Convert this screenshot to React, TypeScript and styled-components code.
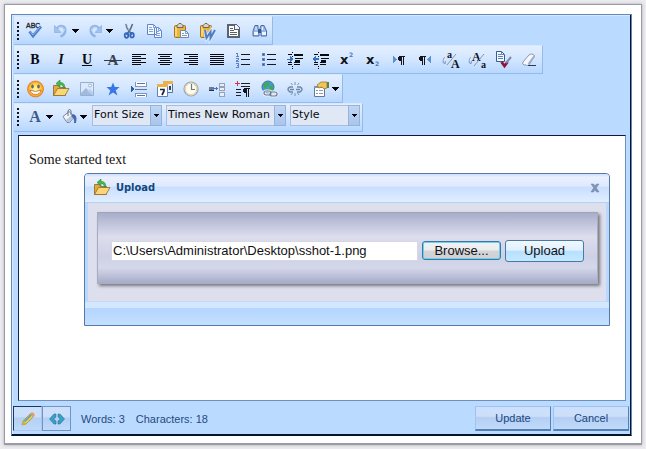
import React from 'react';
import styled, { createGlobalStyle, css } from 'styled-components';

const GlobalStyle = createGlobalStyle`
  * { box-sizing: border-box; }
  body { margin: 0; background: #ebebf0; }
  button, input, select, textarea { margin: 0; font: inherit; color: inherit; border-radius: 0; }
`;

const Page = styled.main`
  min-height: 100vh;
  padding: 4px;
  display: flex;
  background: #ebebf0;
`;

const Frame = styled.div`
  flex: 1;
  min-width: 0;
  display: flex;
  padding: 9px 9px 7px 6px;
  background: #fff;
  border: 1px solid #9b9ba1;
  border-bottom-width: 2px;
  box-shadow: 0 0 3px #a9a9b0;
`;

const Editor = styled.section`
  flex: 1;
  min-width: 0;
  display: flex;
  flex-direction: column;
  padding: 1px 1px 2px;
  background: #bbdaff;
  border: 1px solid #6288b5;
  border-bottom-color: #07152c;
  box-shadow: inset -1px -1px 0 #07152c, inset 1px 1px 0 #d8eaff;
  font-family: 'Liberation Sans', Arial, sans-serif;
`;

const ToolBar = styled.div<{ $short?: boolean }>`
  align-self: flex-start;
  display: flex;
  height: 29px;
  margin-left: 1px;
  padding-right: ${(p) => (p.$short ? 2 : 0)}px;
  align-items: ${(p) => (p.$short ? 'flex-start' : 'center')};
  background: linear-gradient(#e3efff 0%, #d3e6ff 50%, #b7d7ff 100%);
  border-right: 1px solid #95bae8;
  border-bottom: 1px solid #95bae8;
  border-top: 1px solid #d8e8ff;
`;

const Grip = styled.span<{ $short?: boolean }>`
  width: 2px;
  height: 18px;
  margin: ${(p) => (p.$short ? 4 : 0)}px 3px 0;
  flex: none;
  background: repeating-linear-gradient(#10131c 0 2px, transparent 2px 4px);
`;

const ToolButton = styled.button<{ $menu?: boolean }>`
  flex: none;
  width: ${(p) => (p.$menu ? 34 : 26)}px;
  height: 26px;
  padding: 0 0 0 4px;
  display: flex;
  align-items: center;
  gap: 2px;
  border: 0;
  background: none;
  cursor: pointer;
  & svg { flex: none; }
`;

const IconSvg = styled.svg`
  width: 18px;
  height: 18px;
  display: block;
  overflow: visible;
`;

const CaretSvg = styled.svg`
  width: 7px;
  height: 4px;
  display: block;
`;

const Letter = styled.span<{ $kind?: 'italic' | 'underline' }>`
  width: 18px;
  text-align: center;
  font: bold 14px/16px 'Liberation Serif', serif;
  color: #0b0b10;
  ${(p) => p.$kind === 'italic' && css`font-style: italic;`}
  ${(p) => p.$kind === 'underline' && css`text-decoration: underline;`}
`;

const Fields = styled.div`
  display: flex;
  gap: 4px;
  margin: 1px 0 0 2px;
`;

const SelectBox = styled.label<{ $wide?: boolean }>`
  position: relative;
  width: ${(p) => (p.$wide ? 120 : 70)}px;
  height: 21px;
`;

const Select = styled.select`
  display: block;
  appearance: none;
  width: 100%;
  height: 21px;
  padding: 0 14px 2px 1px;
  border: 1px solid #a3bde3;
  background: #dfe8f4;
  color: #0a0a10;
  font: 11px/16px 'DejaVu Sans', Verdana, sans-serif;
`;

const SelectArrow = styled.span`
  position: absolute;
  top: 0;
  right: 0;
  width: 12px;
  height: 21px;
  display: grid;
  place-items: center;
  pointer-events: none;
  background: linear-gradient(#c0d7f5, #a8c5ec);
  border: 1px solid #95b2dc;
  & svg { width: 5px; height: 3px; }
`;

const Workspace = styled.div`
  position: relative;
  flex: 1;
  min-height: 266px;
  margin: 3px 4px 0 5px;
  display: flex;
  border: 1px solid #6d90bd;
  border-top-color: #0d1c38;
  border-left-color: #14284a;
  background: #fff;
`;

const Content = styled.textarea`
  flex: 1;
  padding: 15px 10px;
  border: 0;
  outline: 0;
  resize: none;
  background: #fff;
  color: #111;
  font: 14px/17px 'Liberation Serif', 'Times New Roman', serif;
`;

const Dialog = styled.section`
  position: absolute;
  top: 37px;
  left: 65px;
  right: 15px;
  display: flex;
  flex-direction: column;
  border: 1px solid #567aa8;
  border-radius: 4px 4px 0 0;
  background: #b9d8ff;
  overflow: hidden;
`;

const DialogHeader = styled.header`
  height: 29px;
  padding: 0 8px;
  display: flex;
  align-items: center;
  gap: 5px;
  border-bottom: 1px solid #b3d1f5;
  background: linear-gradient(#cfdfff 0%, #e9f0ff 12%, #dfeaff 42%, #cadfff 48%, #e0eeff 100%);
`;

const DialogTitle = styled.h2`
  flex: 1;
  margin: 0;
  color: #0d477f;
  font: bold 11px/16px 'DejaVu Sans Condensed', 'DejaVu Sans', Tahoma, sans-serif;
`;

const CloseButton = styled.button`
  width: 12px;
  height: 16px;
  padding: 0;
  display: grid;
  place-items: center;
  border: 0;
  background: none;
`;

const DialogBody = styled.div`
  margin: 0 3px;
  padding: 9px 8px 17px 9px;
  background: #dedfed;
  border-bottom: 1px solid #c8d9f5;
`;

const UploadForm = styled.form`
  height: 72px;
  padding: 5px 13px 0;
  display: flex;
  align-items: center;
  gap: 4px;
  background: linear-gradient(#a8adc9 0%, #c7cae0 20%, #dcdeed 34%, #ced1e5 62%, #d5d8ea 78%, #a7acc8 100%);
  border: 1px solid #a9acc2;
  border-top-color: #a0a4b9;
  box-shadow: 2px 2px 3px #77777e;
  font-size: 13px;
`;

const PathInput = styled.input`
  flex: 1;
  min-width: 0;
  height: 20px;
  padding: 0 1px;
  border: 1px solid #d5d7e4;
  background: #fff;
  color: #111;
`;

const FormButton = styled.button<{ $primary?: boolean }>`
  flex: none;
  width: 79px;
  height: ${(p) => (p.$primary ? 22 : 19)}px;
  padding: 0;
  border: 1px solid #467ba6;
  border-radius: 3px;
  color: #111;
  line-height: 16px;
  background: linear-gradient(#f2f7ff 0%, #dff1ff 45%, #b8e0ff 52%, #c4e8ff 100%);
  ${(p) => !p.$primary && css`
    border-color: #347aa5;
    box-shadow: inset 0 0 0 1px #70cfee;
    background: linear-gradient(#f2f2f2 0%, #ececef 48%, #d3d4d8 52%, #d1d1d5 100%);
  `}
`;

const DialogFooter = styled.footer`
  height: 23px;
  background: linear-gradient(#d2e8ff 0 6px, #b4d5ff 6px, #c4dfff);
`;

const StatusBar = styled.footer`
  height: 32px;
  display: flex;
  align-items: center;
  padding: 3px 1px 0 0;
  color: #1f4a80;
  font-size: 11px;
`;

const panelShade = 'linear-gradient(#cde0fb 0%, #cbdffb 42%, #b4cff3 48%, #c1dafa 100%)';

const ModeButton = styled.button<{ $active?: boolean }>`
  width: 29px;
  height: 25px;
  padding: 0;
  display: grid;
  place-items: center;
  background: ${panelShade};
  border: 1px solid #7294c4;
  ${(p) => p.$active && css`
    border-color: #18365f #a9c8f0 #a9c8f0 #18365f;
  `}
`;

const Stats = styled.p`
  flex: 1;
  margin: 0 0 0 10px;
  display: flex;
  gap: 11px;
`;

const StatusActions = styled.div`
  display: flex;
  gap: 2px;
`;

const StatusButton = styled.button`
  width: 76px;
  height: 25px;
  padding: 0;
  color: #1d467f;
  background: ${panelShade};
  border: 1px solid #9fc2ee;
  border-right-color: #547fb5;
  border-bottom: 2px solid #547fb5;
`;

const Caret = () => (
  <CaretSvg viewBox="0 0 7 4" shapeRendering="crispEdges" aria-hidden="true">
    <path d="M0 0h7v1H6v1H5v1H4v1H3V3H2V2H1V1H0z" fill="#05060b" />
  </CaretSvg>
);

const Icon = ({ children, crisp }: { children: React.ReactNode; crisp?: boolean }) => (
  <IconSvg viewBox="0 0 18 18" fill="none" aria-hidden="true" shapeRendering={crisp ? 'crispEdges' : 'auto'}>
    {children}
  </IconSvg>
);

const undoArrow = (
  <>
    <path d="M5 6.500C8 2.500 13.500 3.500 13.200 9 13 12 11 13.500 8.500 14.500" stroke="#8fb4e8" strokeWidth="2.600" />
    <path d="M5.500 6.500C9 3.500 13 5 12.500 9" stroke="#bdd5f5" strokeWidth="1" />
    <path d="M2.500 3.500v7h6.500z" fill="#a3c2ee" stroke="#88ace2" strokeWidth=".7" />
  </>
);

const clipboard = (
  <>
    <rect x="2.500" y="3.500" width="11" height="12" rx="1" fill="#edb43a" stroke="#a37422" />
    <path d="M4 5v9" stroke="#ffe08a" strokeWidth="1.500" />
    <path d="M5 5.500V3.500l2-2h2l2 2v2z" fill="#d8d4c8" stroke="#76644a" />
  </>
);

const folder = (
  <>
    <path d="M1.500 15.500v-10h5l1 2h6v8z" fill="#e5a93b" stroke="#8a662c" strokeWidth=".8" />
    <path d="M1.500 15.500l4-7h11.500l-4 7z" fill="#fbd677" stroke="#926b28" strokeWidth=".8" />
    <path d="M11 8c.5-2.500-1-3.500-3-3.500V7L4 3.500 8 0v2.500c4 0 5 2.500 4.500 5.500z" fill="#45bd4b" stroke="#248739" strokeWidth=".6" />
  </>
);

const pilcrow = (x: number, y: number) => (
  <path
    transform={`translate(${x} ${y})`}
    d="M2 0h6v1H7v8H6V1H5v8H4V5H2V4H1V1h1z"
    fill="#15151b"
  />
);

const indentLines = (
  <path
    d="M2 3h4v1H2zM8 3h9v2H8zM9 7h8v1H9zM9 9h5v2H9zM2 13h4v1H2zM8 13h6v1H8zM2 11h4v1H2zM8 11h6v1H8zM6 1h1v1H6zM6 5h1v1H6zM6 15h1v1H6zM6 17h1v1H6z"
    fill="#090b11"
  />
);

const caseArrow = <path d="M3 6c-2 1.500-2.500 4-.5 6.500M.5 11l2.500 2 .5-3" stroke="#7e9cc8" />;

const icons: Record<string, React.ReactNode> = {
  spell: (
    <Icon>
      <text x="0" y="6" fontSize="7" fontFamily="Liberation Sans" stroke="#20242d" strokeWidth=".3" fill="#20242d">ABC</text>
      <path d="M3.500 9.500l3.500 4.500 8-9.500" stroke="#4c7ccc" strokeWidth="2.800" />
      <path d="M4 9.500l3 3.500 7-8" stroke="#8eb2ee" strokeWidth="1" />
    </Icon>
  ),
  undo: <Icon>{undoArrow}</Icon>,
  redo: <Icon><g transform="translate(18 0) scale(-1 1)">{undoArrow}</g></Icon>,
  cut: (
    <Icon>
      <path d="M6 2l1 4 5 7M12.500 2l-2 5-4 6" stroke="#596b86" strokeWidth="1.600" />
      <path d="M6.500 2.500l2.500 6" stroke="#c8d2df" strokeWidth=".7" />
      <ellipse cx="6.500" cy="13.500" rx="1.800" ry="2.300" stroke="#2e66bc" strokeWidth="1.700" />
      <ellipse cx="12" cy="13.200" rx="1.800" ry="2.300" stroke="#2e66bc" strokeWidth="1.700" />
    </Icon>
  ),
  copy: (
    <Icon>
      <path d="M1.500 2.500h6l3 3v7h-9zM8.500 5.500h4l3 3v7h-7z" fill="#f5f9ff" stroke="#5f86ca" />
      <path d="M7.500 2.500v3h3M12.500 5.500v3h3M3 5.500h3M3 7.500h4M3 9.500h4M10 9.500h3M10 11.500h4M10 13.500h4" stroke="#7fa2dc" />
    </Icon>
  ),
  paste: (
    <Icon>
      {clipboard}
      <path d="M8.500 8.500h5l3 3v4h-8z" fill="#fafcff" stroke="#7188ad" />
      <path d="M13.500 8.500v3h3M10 11.500h2M10 13.500h5" stroke="#8399bd" />
    </Icon>
  ),
  pasteWord: (
    <Icon>
      {clipboard}
      <path d="M7 8l1.500 8 4-6v6L17 8" stroke="#dce8fb" strokeWidth="3.600" />
      <path d="M7 8l1.500 8 4-6v6L17 8" stroke="#4d7cc6" strokeWidth="2" />
    </Icon>
  ),
  document: (
    <Icon crisp>
      <path d="M3 2h9l4 4v10H3z" fill="#5c6370" />
      <path d="M5 4h5v4h4v6H5z" fill="#fff" />
      <path d="M6 6h3v1H6zM6 8h4v1H6zM6 10h7v1H6zM6 12h7v1H6z" fill="#59616c" />
      <path d="M11 3h1l3 3v1h-4z" fill="#eef2f7" />
    </Icon>
  ),
  find: (
    <Icon>
      <path d="M5 3.500h3v3l1 2V14H3V9zM11 3.500h3L16.500 9v5H11V8.500l-1-2z" fill="#9fb8df" stroke="#486fb0" />
      <path d="M8 7h3v4H8z" fill="#355a95" />
      <path d="M4 11.500h4M12 11.500h4" stroke="#edf4fd" strokeWidth="3" />
      <path d="M6 5v3M12.500 5v3" stroke="#f2f6fd" />
    </Icon>
  ),
  strike: (
    <Icon>
      <text x="9" y="14" textAnchor="middle" fontFamily="Liberation Serif" fontSize="15" fontWeight="bold" fill="#3b444d">A</text>
      <path d="M0 9.500h18" stroke="#323d4a" />
    </Icon>
  ),
  numbers: (
    <Icon crisp>
      <path d="M7 3h9v1H7zM7 8h9v1H7zM7 13h9v1H7z" fill="#151923" />
      <path d="M2 2h2v3h1v1H2V5h1V3H2zM2 7h3v2H4v1h1v1H2V9h2V8H2zM2 12h3v5H2v-1h2v-1H3v-1h1v-1H2z" fill="#5b82c4" />
    </Icon>
  ),
  bullets: (
    <Icon crisp>
      <path d="M7 3h9v1H7zM7 8h9v1H7zM7 13h9v1H7z" fill="#151923" />
      <path d="M2 2h3v3H2zM2 7h3v3H2zM2 12h3v3H2z" fill="#6286c2" />
      <path d="M3 3h1v1H3zM3 8h1v1H3zM3 13h1v1H3z" fill="#2d508e" />
    </Icon>
  ),
  indent: <Icon crisp>{indentLines}<path d="M1 8h3V5h1v1h1v1h1v2H6v1H5v1H4V9H1z" fill="#3870c6" /></Icon>,
  outdent: <Icon crisp>{indentLines}<path d="M1 7h1V6h1V5h1v2h3v2H4v2H3v-1H2V9H1z" fill="#3870c6" /></Icon>,
  sup: (
    <Icon>
      <text x="2" y="13" fontFamily="DejaVu Sans" fontWeight="bold" fontSize="13" fill="#11131a">x</text>
      <text x="11" y="6" fontFamily="DejaVu Sans" fontWeight="bold" fontSize="6" fill="#4279c5">2</text>
    </Icon>
  ),
  sub: (
    <Icon>
      <text x="2" y="13" fontFamily="DejaVu Sans" fontWeight="bold" fontSize="13" fill="#11131a">x</text>
      <text x="11" y="15" fontFamily="DejaVu Sans" fontWeight="bold" fontSize="6" fill="#4279c5">2</text>
    </Icon>
  ),
  ltr: <Icon crisp><path d="M3 5h1v1h1v1h1v1h1v1H6v1H5v1H4v1H3z" fill="#5c92d6" />{pilcrow(7, 5)}</Icon>,
  rtl: <Icon crisp>{pilcrow(2, 5)}<path d="M15 5h-1v1h-1v1h-1v1h-1v1h1v1h1v1h1v1h1z" fill="#5c92d6" /></Icon>,
  upper: (
    <Icon>
      <text x="5" y="7" fontFamily="Liberation Serif" fontWeight="bold" fontSize="10" fill="#12151d">a</text>
      <text x="9" y="17" fontFamily="Liberation Serif" fontWeight="bold" fontSize="12" fill="#12151d">A</text>
      <path d="M14 3L5 14" stroke="#8297b7" />
      {caseArrow}
    </Icon>
  ),
  lower: (
    <Icon>
      <text x="4" y="10" fontFamily="Liberation Serif" fontWeight="bold" fontSize="12" fill="#12151d">A</text>
      <text x="13" y="17" fontFamily="Liberation Serif" fontWeight="bold" fontSize="10" fill="#12151d">a</text>
      <path d="M16 3L6 15" stroke="#8297b7" />
      {caseArrow}
    </Icon>
  ),
  cleanup: (
    <Icon>
      <path d="M2.500.500h5l3 3v7h-8z" fill="#f4f8ff" stroke="#325c96" />
      <path d="M7.500.500v3h3M4 3.500h3M4 5.500h5M4 7.500h5" stroke="#6184b5" />
      <path d="M7.500 11l3 4 3-4" stroke="#8c1737" strokeWidth="2.800" />
      <path d="M12 12l5-6" stroke="#7d8ab5" strokeWidth="2" />
    </Icon>
  ),
  eraser: (
    <Icon>
      <path d="M3 11l6-7q1-1 3-1l2 1q1 1 0 2l-5 8q-1 1-3 0H4q-2-1-1-3z" fill="#f5f8ff" stroke="#8999b2" />
      <path d="M8.500 13l5.500-7.500" stroke="#a2b1c8" strokeWidth="2" />
      <path d="M8 14.500h8" stroke="#253c5b" />
    </Icon>
  ),
  smile: (
    <Icon>
      <defs>
        <radialGradient id="smileGlow"><stop offset=".2" stopColor="#fff298" /><stop offset=".7" stopColor="#ffc83b" /><stop offset="1" stopColor="#f28725" /></radialGradient>
      </defs>
      <circle cx="9.500" cy="9" r="8" fill="url(#smileGlow)" stroke="#df8124" strokeWidth=".8" />
      <ellipse cx="6.500" cy="6.500" rx="1.300" ry="1.900" fill="#596970" /><ellipse cx="12.500" cy="6.500" rx="1.300" ry="1.900" fill="#596970" />
      <path d="M4 10q5.500 3 11 0-1 4.500-5.500 4.500T4 10z" fill="#fff" stroke="#c3652b" strokeWidth=".8" />
    </Icon>
  ),
  folder: <Icon>{folder}</Icon>,
  image: (
    <Icon>
      <path d="M2.500 2.500h13v13h-13z" fill="#dce9fa" stroke="#96b0d2" />
      <path d="M3 13l5-5 7 7H3z" fill="#9fbbe0" /><path d="M9 11l3-2 3 3v3z" fill="#bad0ec" />
      <circle cx="12" cy="5.500" r="1.500" fill="#fff" stroke="#86a5d1" strokeWidth=".8" />
    </Icon>
  ),
  star: <Icon><path d="M9 2.500l1.800 4.500H15.500l-3.800 3.500 1.800 5L9 12.500 4.500 15.500l1.800-5L2.500 7H7.200z" fill="#3875e7" /></Icon>,
  pageBreak: (
    <Icon crisp>
      <path d="M5 2v4h11V2M5 17v-4h11v4" fill="#fff" stroke="#8297b8" />
      <path d="M5 9h12v1H5zM7 3h8v1H7zM7 15h8v1H7z" fill="#5578af" />
      <path d="M1 6h1v1h1v1h1v2H3v1H2v1H1z" fill="#2b609c" />
    </Icon>
  ),
  calendar: (
    <Icon>
      <path d="M7.500 2.500h9v10h-9z" fill="#e7f1ff" stroke="#5373a0" /><path d="M7 1h10v3H7z" fill="#edb245" />
      <path d="M1.500 5.500h10v11h-10z" fill="#fff" stroke="#5f84bd" /><path d="M1 4h11v3H1z" fill="#edb245" />
      <path d="M4 9.500h4v1.500l-2 4M14 6v4" stroke="#17253d" strokeWidth="1.700" />
    </Icon>
  ),
  clock: (
    <Icon>
      <circle cx="9" cy="9" r="7" fill="#fffdf0" stroke="#91a8c9" strokeWidth="1.200" />
      <circle cx="9" cy="9" r="5.700" stroke="#f1cd7e" />
      <path d="M9.500 4v5.500H13" stroke="#687b96" strokeWidth="1.200" />
    </Icon>
  ),
  fields: (
    <Icon crisp>
      <path d="M1 7h5v4H1z" fill="#6c7a91" /><path d="M1 10h5v1H1z" fill="#26344a" />
      <path d="M6 8h2V7h1v1h1v1H9v1H8V9H6z" fill="#4276c3" />
      <path d="M11 3h5v3h-5zM11 7h5v3h-5zM11 12h5v4h-5z" fill="#e9edf4" stroke="#94a2b9" />
    </Icon>
  ),
  paragraph: (
    <Icon crisp>
      <path d="M1 3h5v1H1zM3 1h1v5H3z" fill="#d0353a" />
      <path d="M7 3h9v1H7zM7 6h9v1H7zM2 9h5v1H2zM2 12h5v1H2zM2 15h5v1H2z" fill="#1a202c" />{pilcrow(8, 8)}
    </Icon>
  ),
  link: (
    <Icon>
      <circle cx="8" cy="7" r="6" fill="#4699d9" stroke="#3f71a1" />
      <path d="M3 5l3-3 4 1-1 3-3 1-1 3zM9 7l3-2 2 2-2 4-3-1z" fill="#41aa54" />
      <rect x="4" y="11" width="7" height="4" rx="2" stroke="#e9eef4" strokeWidth="3" /><rect x="10" y="12" width="7" height="4" rx="2" stroke="#e9eef4" strokeWidth="3" />
      <rect x="4" y="11" width="7" height="4" rx="2" stroke="#6b7d95" strokeWidth="1.200" /><rect x="10" y="12" width="7" height="4" rx="2" stroke="#6b7d95" strokeWidth="1.200" />
    </Icon>
  ),
  unlink: (
    <Icon>
      <path d="M7 7H4q-4 2 0 5h3M11 7h3q4 2 0 5h-3M4 9.500h4M10 9.500h4" stroke="#7089aa" strokeWidth="1.500" />
      <path d="M9 2v3M5 3l1.500 2M13 3l-1.500 2M9 13v3M5 15l1.500-2M13 15l-1.500-2" stroke="#7d94b3" />
    </Icon>
  ),
  properties: (
    <Icon>
      <path d="M2.500 6.500h10v10h-10z" fill="#fff" stroke="#68798e" /><path d="M2 6h11v2H2z" fill="#7597c4" />
      <path d="M4 10.500h2M7 10.500h4M4 13.500h2M7 13.500h4" stroke="#8a9aae" />
      <path d="M5 5l4-3h6v6l-3 1-2-2-3 1z" fill="#f2c355" stroke="#a37626" strokeWidth=".8" /><path d="M15 2h2v6h-2z" fill="#4f855b" />
    </Icon>
  ),
  fontColor: <Icon><text x="9" y="14" textAnchor="middle" fontFamily="Liberation Serif" fontSize="16" fontWeight="bold" fill="#3b5a8d">A</text></Icon>,
  bucket: (
    <Icon>
      <path d="M3 8.500l6-5 5.500 5-5 6H7z" fill="#f1f5fb" stroke="#7a879d" />
      <path d="M6 12l6-5 2 2-5 5H7z" fill="#b7c6dc" /><path d="M8 8V2.500q1.500-2 3 0V7" stroke="#65718a" />
      <path d="M13 6q5 1 3 9h-2q1-4-3-7z" fill="#4468b3" />
    </Icon>
  ),
};

const alignments: Record<string, [number, number][]> = {
  left: [[2, 14], [2, 9], [2, 14], [2, 9], [2, 14], [2, 9]],
  center: [[2, 14], [4, 10], [2, 14], [4, 10], [2, 14], [4, 10]],
  right: [[2, 14], [7, 9], [2, 14], [7, 9], [2, 14], [7, 9]],
  justify: [[2, 14], [2, 14], [2, 14], [2, 14], [2, 14], [2, 14]],
};

Object.entries(alignments).forEach(([name, lines]) => {
  icons[name] = (
    <Icon crisp>
      {lines.map(([x, w], i) => <rect key={i} x={x} y={3 + i * 2} width={w} height="1" fill="#080a0f" />)}
    </Icon>
  );
});

icons.bold = <Letter>B</Letter>;
icons.italic = <Letter $kind="italic">I</Letter>;
icons.underline = <Letter $kind="underline">U</Letter>;

type Tool = [icon: string, label: string, menu?: boolean];

const rows: Tool[][] = [
  [['spell', 'Check spelling'], ['undo', 'Undo', true], ['redo', 'Redo', true], ['cut', 'Cut'], ['copy', 'Copy'], ['paste', 'Paste'], ['pasteWord', 'Paste from Word'], ['document', 'Paste plain text'], ['find', 'Find']],
  [['bold', 'Bold'], ['italic', 'Italic'], ['underline', 'Underline'], ['strike', 'Strikethrough'], ['left', 'Align left'], ['center', 'Align center'], ['right', 'Align right'], ['justify', 'Justify'], ['numbers', 'Numbered list'], ['bullets', 'Bulleted list'], ['indent', 'Indent'], ['outdent', 'Outdent'], ['sup', 'Superscript'], ['sub', 'Subscript'], ['ltr', 'Left to right'], ['rtl', 'Right to left'], ['upper', 'Upper case'], ['lower', 'Lower case'], ['cleanup', 'Clean up'], ['eraser', 'Remove formatting']],
  [['smile', 'Smiley'], ['folder', 'Upload file'], ['image', 'Image'], ['star', 'Symbol'], ['pageBreak', 'Page break'], ['calendar', 'Date'], ['clock', 'Time'], ['fields', 'Fields'], ['paragraph', 'New paragraph'], ['link', 'Insert link'], ['unlink', 'Remove link'], ['properties', 'Properties', true]],
];

const ToolItem = ({ tool: [icon, label, menu] }: { tool: Tool }) => (
  <ToolButton type="button" aria-label={label} title={label} $menu={menu}>
    {icons[icon]}
    {menu && <Caret />}
  </ToolButton>
);

const DropDown = ({ label, value, wide }: { label: string; value: string; wide?: boolean }) => (
  <SelectBox $wide={wide}>
    <Select aria-label={label} defaultValue={value}><option>{value}</option></Select>
    <SelectArrow><Caret /></SelectArrow>
  </SelectBox>
);

const UploadDialog = () => (
  <Dialog role="dialog" aria-labelledby="upload-title">
    <DialogHeader>
      {icons.folder}
      <DialogTitle id="upload-title">Upload</DialogTitle>
      <CloseButton type="button" aria-label="Close">
        <svg width="10" height="10" viewBox="0 0 10 10" aria-hidden="true">
          <path d="M1 1h2.500L5 3l1.500-2H9L6.300 4.800 9 9H6.500L5 6.800 3.500 9H1l2.700-4.200z" fill="#8096b6" stroke="#6c83a6" strokeWidth=".5" />
        </svg>
      </CloseButton>
    </DialogHeader>
    <DialogBody>
      <UploadForm onSubmit={(event) => event.preventDefault()}>
        <PathInput aria-label="File path" defaultValue="C:\Users\Administrator\Desktop\sshot-1.png" />
        <FormButton type="button">Browse...</FormButton>
        <FormButton type="submit" $primary>Upload</FormButton>
      </UploadForm>
    </DialogBody>
    <DialogFooter />
  </Dialog>
);

export default function App() {
  return (
    <>
      <GlobalStyle />
      <Page>
        <Frame>
          <Editor>
            {rows.map((tools, index) => (
              <ToolBar key={index} role="toolbar">
                <Grip />
                {tools.map((tool) => <ToolItem key={tool[0]} tool={tool} />)}
              </ToolBar>
            ))}
            <ToolBar role="toolbar" $short>
              <Grip $short />
              <ToolItem tool={['fontColor', 'Font color', true]} />
              <ToolItem tool={['bucket', 'Background color', true]} />
              <Fields>
                <DropDown label="Font size" value="Font Size" />
                <DropDown label="Font name" value="Times New Roman" wide />
                <DropDown label="Style" value="Style" />
              </Fields>
            </ToolBar>
            <Workspace>
              <Content aria-label="Document text" defaultValue="Some started text" />
              <UploadDialog />
            </Workspace>
            <StatusBar>
              <ModeButton type="button" aria-label="Design mode" $active>
                <svg width="16" height="16" viewBox="0 0 16 16" aria-hidden="true">
                  <path d="M2 14l1-4 8-8 3 3-8 8z" fill="#f0ca3f" stroke="#a08a55" strokeWidth=".7" />
                  <path d="M4.500 10.500l8-8" stroke="#4fa0c8" strokeWidth="1.600" />
                  <path d="M10 3l3 3 1.500-1.500v-1.500l-1.500-1.500h-1.500z" fill="#e59a6a" /><path d="M2 14l1-4 3 3z" fill="#c4b53c" />
                </svg>
              </ModeButton>
              <ModeButton type="button" aria-label="HTML mode">
                <svg width="18" height="12" viewBox="0 0 18 12" aria-hidden="true">
                  <path d="M8 1v3L5.500 6 8 8v3H6L1.500 6 6 1zM10 1v3l2.500 2L10 8v3h2l4.500-5L12 1z" fill="#36a1ca" stroke="#297398" strokeWidth=".6" />
                </svg>
              </ModeButton>
              <Stats><span>Words: 3</span><span>Characters: 18</span></Stats>
              <StatusActions>
                <StatusButton type="button">Update</StatusButton>
                <StatusButton type="button">Cancel</StatusButton>
              </StatusActions>
            </StatusBar>
          </Editor>
        </Frame>
      </Page>
    </>
  );
}
